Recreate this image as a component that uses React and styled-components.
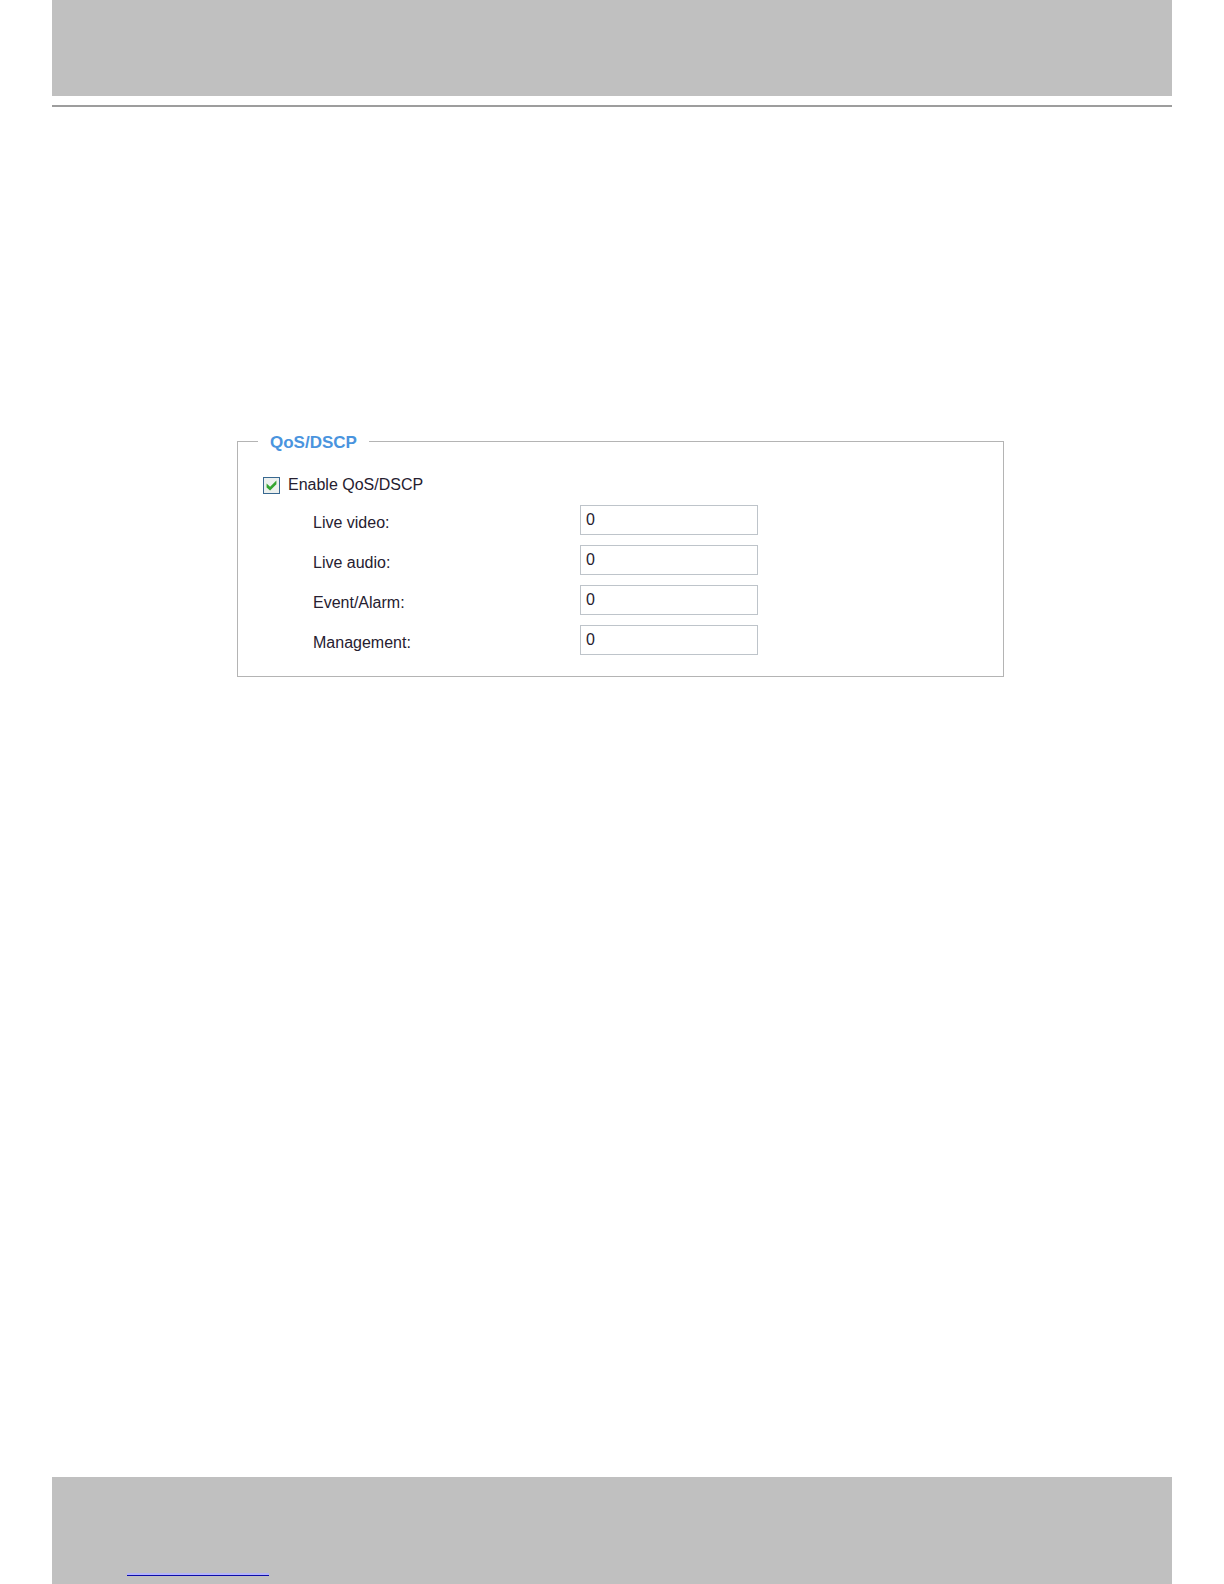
import React, { useState } from "react";
import styled, { createGlobalStyle } from "styled-components";

const FIELDS = [
  { id: "live-video", label: "Live video:" },
  { id: "live-audio", label: "Live audio:" },
  { id: "event-alarm", label: "Event/Alarm:" },
  { id: "management", label: "Management:" },
];

const App = () => {
  const [enabled, setEnabled] = useState(true);
  const [values, setValues] = useState({
    "live-video": "0",
    "live-audio": "0",
    "event-alarm": "0",
    management: "0",
  });

  const handleChange = (ev) => {
    setValues({ ...values, [ev.target.id]: ev.target.value });
  };

  return (
    <>
      <GlobalStyle />
      <Page>
        <Header />
        <Rule />
        <Main>
          <Group>
            <Legend>QoS/DSCP</Legend>
            <EnableRow>
              <CheckWrapper>
                <Checkbox
                  type="checkbox"
                  id="enable-qos"
                  checked={enabled}
                  onChange={(ev) => setEnabled(ev.target.checked)}
                />
                {enabled && (
                  <CheckMark viewBox="0 0 18 18" aria-hidden="true">
                    <path d="M3.8 7 L7.5 10.2 L14.2 3.8 V7.8 L7.5 14.4 L3.8 11 Z" />
                  </CheckMark>
                )}
              </CheckWrapper>
              <label htmlFor="enable-qos">Enable QoS/DSCP</label>
            </EnableRow>
            <Fields>
              {FIELDS.map(({ id, label }) => (
                <FieldRow key={id}>
                  <FieldLabel htmlFor={id}>{label}</FieldLabel>
                  <TextInput
                    type="text"
                    id={id}
                    value={values[id]}
                    onChange={handleChange}
                  />
                </FieldRow>
              ))}
            </Fields>
          </Group>
        </Main>
        <Footer>
          <FooterLink href="#" aria-label="Website" />
        </Footer>
      </Page>
    </>
  );
};

const GlobalStyle = createGlobalStyle`
  * {
    box-sizing: border-box;
  }
  body {
    margin: 0;
    background: white;
    color: rgb(38, 32, 48);
    font-family: "Liberation Sans", Arial, sans-serif;
    font-size: 16px;
    line-height: 20px;
  }
`;

const Page = styled.div`
  min-height: 100vh;
  padding: 0 52px;
  display: flex;
  flex-direction: column;
`;

const Header = styled.header`
  height: 96px;
  background: rgb(192, 192, 192);
`;

const Rule = styled.hr`
  width: 100%;
  height: 2px;
  margin: 9px 0 0;
  border: none;
  background: rgb(157, 157, 157);
`;

const Main = styled.main`
  flex: 1;
  padding: 322px 168px 64px 185px;
`;

const Group = styled.fieldset`
  min-width: 0;
  margin: 0;
  padding: 22px 25px 21px;
  border: 1px solid rgb(180, 180, 180);
`;

const Legend = styled.legend`
  margin-left: -5px;
  padding: 4px 12px 0;
  color: rgb(74, 148, 222);
  font-size: 17px;
  font-weight: bold;
`;

const EnableRow = styled.div`
  display: flex;
  align-items: center;
  gap: 8px;
`;

const CheckWrapper = styled.span`
  position: relative;
  width: 17px;
  height: 17px;
`;

const Checkbox = styled.input`
  appearance: none;
  display: block;
  width: 17px;
  height: 17px;
  margin: 0;
  border: 1px solid rgb(56, 104, 144);
  background: rgb(236, 240, 238);
`;

const CheckMark = styled.svg`
  position: absolute;
  inset: 0;
  fill: rgb(52, 165, 48);
  pointer-events: none;
`;

const Fields = styled.div`
  display: flex;
  flex-direction: column;
  gap: 10px;
  padding: 10px 0 0 50px;
`;

const FieldRow = styled.div`
  display: flex;
`;

const FieldLabel = styled.label`
  width: 267px;
  padding-top: 8px;
`;

const TextInput = styled.input`
  width: 178px;
  height: 30px;
  padding: 0 5px;
  border: 1px solid rgb(190, 196, 202);
  background: white;
  color: inherit;
  font: inherit;
`;

const Footer = styled.footer`
  display: flex;
  align-items: flex-end;
  height: 107px;
  padding: 0 75px 8px;
  background: rgb(192, 192, 192);
`;

const FooterLink = styled.a`
  width: 142px;
  height: 20px;
  border-bottom: 1px solid rgb(12, 12, 168);
  box-shadow: inset 0 -2px rgb(180, 180, 248);
`;

export default App;
